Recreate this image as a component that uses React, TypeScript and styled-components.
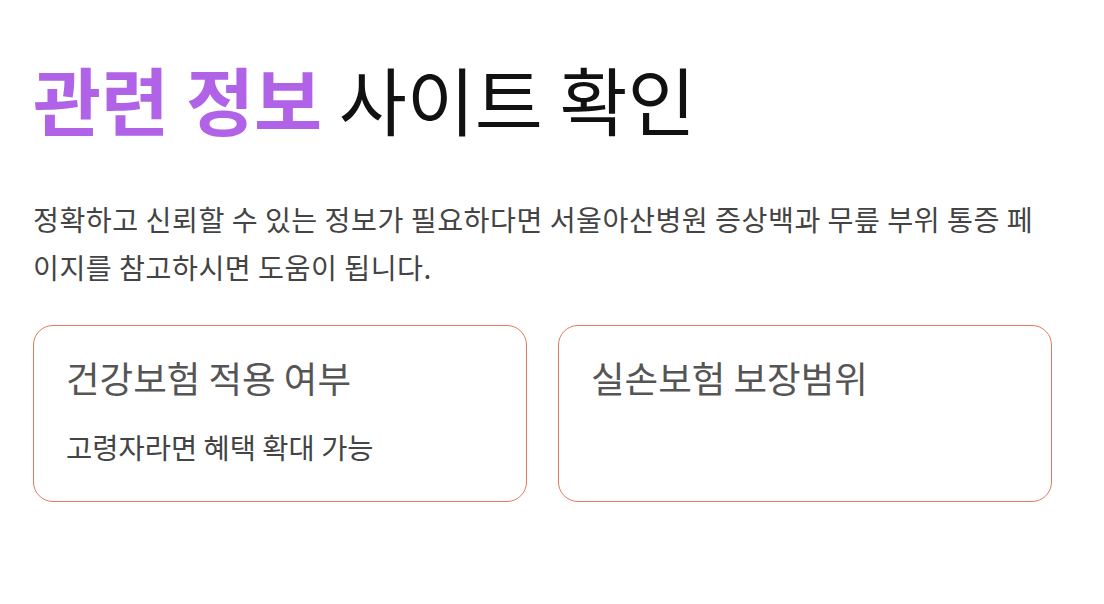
import styled, { createGlobalStyle } from 'styled-components';

const GlobalStyle = createGlobalStyle`
  html, body {
    margin: 0;
    padding: 0;
    background: #ffffff;
  }
  body {
    font-family: 'Noto Sans CJK KR', 'Noto Sans', sans-serif;
  }
`;

const cards = [
  { title: '건강보험 적용 여부', desc: '고령자라면 혜택 확대 가능' },
  { title: '실손보험 보장범위', desc: '' },
];

export default function App() {
  return (
    <>
      <GlobalStyle />
      <Page>
        <Heading>
          <Accent>관련 정보</Accent> 사이트 확인
        </Heading>
        <Intro>
          정확하고 신뢰할 수 있는 정보가 필요하다면 서울아산병원 증상백과 무릎 부위 통증 페이지를
          참고하시면 도움이 됩니다.
        </Intro>
        <CardGrid>
          {cards.map((c) => (
            <Card key={c.title}>
              <CardTitle>{c.title}</CardTitle>
              {c.desc && <CardText>{c.desc}</CardText>}
            </Card>
          ))}
        </CardGrid>
      </Page>
    </>
  );
}

const Page = styled.main`
  width: 1019px;
  padding: 48px 0 0 33px;
`;

const Heading = styled.h1`
  margin: 0;
  font-size: 74px;
  line-height: 100px;
  font-weight: 400;
  color: #111111;
`;

const Accent = styled.span`
  color: #b163e8;
  font-weight: 700;
`;

const Intro = styled.p`
  margin: 47px 0 0;
  font-size: 28.2px;
  line-height: 48px;
  letter-spacing: 0.5px;
  color: #444444;
`;

const CardGrid = styled.div`
  display: grid;
  grid-template-columns: 1fr 1fr;
  gap: 31px;
  margin-top: 34px;
`;

const Card = styled.section`
  height: 177px;
  box-sizing: border-box;
  border: 1px solid #e27a5f;
  border-radius: 20px;
  padding: 30px 32px;
`;

const CardTitle = styled.h2`
  margin: 0;
  font-size: 36.5px;
  line-height: 44px;
  font-weight: 400;
  color: #555555;
`;

const CardText = styled.p`
  margin: 29px 0 0;
  font-size: 28.5px;
  line-height: 36px;
  color: #444444;
`;
